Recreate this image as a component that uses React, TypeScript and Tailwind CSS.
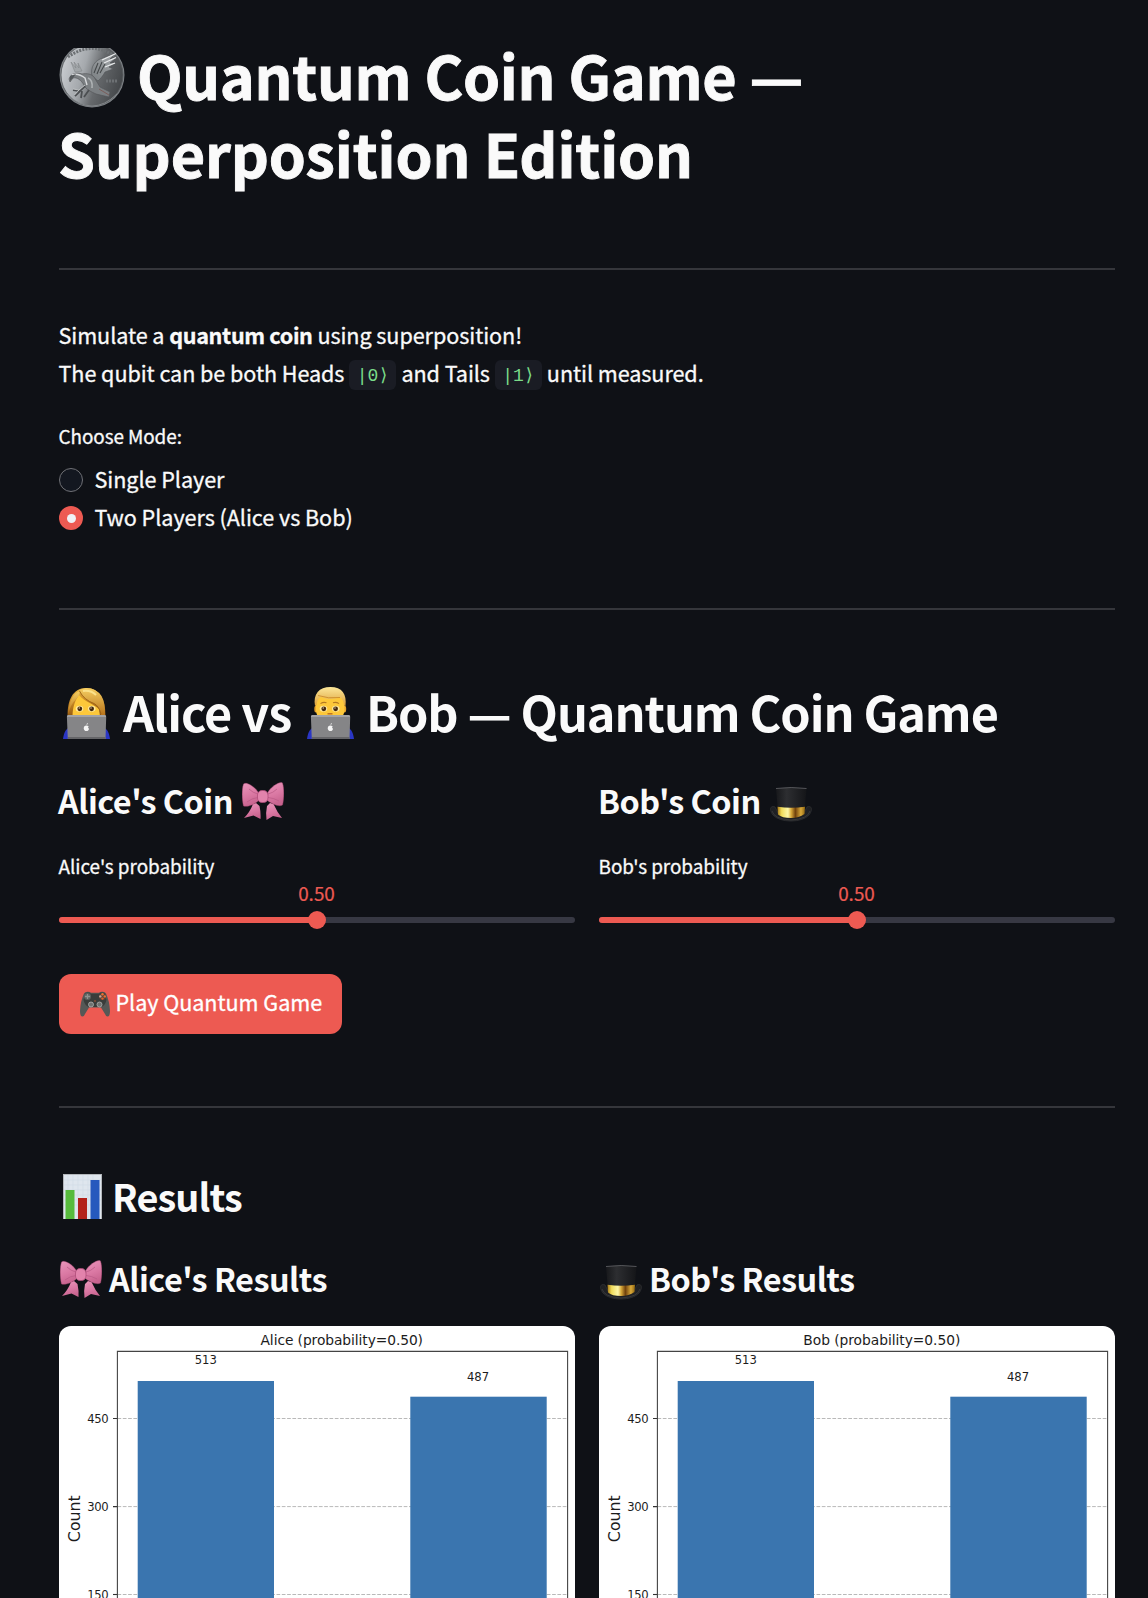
import React from "react";

function Coin() {
  return (
    <svg className="mt-[13px] h-[60px] w-[66px] shrink-0" viewBox="0 6 66 60">
      <defs>
        <linearGradient id="coinFace" x1="0" y1="0.35" x2="1" y2="0.65">
          <stop offset="0" stopColor="#c9ccd0" />
          <stop offset="0.35" stopColor="#a5a9ad" />
          <stop offset="0.6" stopColor="#66696c" />
          <stop offset="1" stopColor="#424548" />
        </linearGradient>
        <linearGradient id="coinWing" x1="0" y1="1" x2="1" y2="0">
          <stop offset="0" stopColor="#7b8083" />
          <stop offset="1" stopColor="#a9acaf" />
        </linearGradient>
      </defs>
      <circle cx="33" cy="33" r="32.5" fill="#7e8286" />
      <circle cx="33" cy="33" r="31" fill="url(#coinFace)" stroke="#55595c" strokeWidth="0.8" />
      <path d="M9 15 Q 33 -2 57 15" fill="none" stroke="#6d7174" strokeWidth="3" strokeDasharray="2 1.2" />
      <path d="M33 34 C31 25 36 18 44 16 L57 11 L51 17 L58 15 L51 21 L57 21 L50 25 L54 27 L46 30 C44 34 41 37 39 39 Z" fill="url(#coinWing)" stroke="#505457" strokeWidth="0.6" />
      <path d="M43 18 L57 11.500 M45 21 L57 15.500 M46 25 L56 21" stroke="#e9ebec" strokeWidth="1.3" fill="none" />
      <path d="M35 31 L39 21 M38 32 L43 20 M41 31 L46 22" stroke="#45494b" strokeWidth="1.1" fill="none" />
      <path d="M12 20 L17 26 L15 20 L20 26 L19 21 L23 29 L16 30 Z" fill="#a1a5a8" stroke="#7c8083" strokeWidth="0.5" />
      <path d="M10 37 C12 31 18 30 23 32 C28 31 32 32 35 35 L41 45 L51 50 L50 55 L37 52 C33 50 27 48 25 43 C22 38 18 35 14 36 L11 40 Z" fill="#7b7f82" stroke="#505356" strokeWidth="0.6" />
      <path d="M13 33 C18 31 22 33 26 36 L28 43" fill="none" stroke="#d8dadc" strokeWidth="1.4" />
      <path d="M11 34 L17 32 L14 36 L11 39" fill="#54585b" />
      <path d="M29 36 Q34 38 33 46" fill="none" stroke="#aeb2b4" strokeWidth="1.6" />
      <path d="M26 44 L21 49 L14 48 M21 49 L16 54 M23 49 L22 56 M30 48 L25 55" fill="none" stroke="#4b4e51" strokeWidth="1.8" />
      <path d="M26 43 L20 48 L14 47 M20 48 L15.500 53" fill="none" stroke="#c5c8ca" strokeWidth="0.9" />
      <path d="M40 47 L50 53" stroke="#7b5a57" strokeWidth="0.9" />
      <path d="M47 39 h12" stroke="#6d7174" strokeWidth="3" strokeDasharray="2 1" />
      <path d="M8 52 Q 33 76 58 52" fill="none" stroke="#8d9194" strokeWidth="0.8" />
    </svg>
  );
}

function Laptop() {
  return (
    <g>
      <path d="M0 52 C1 45 3 41 8 40 H39 C44 41 46 45 47 52 Z" fill="#2a36c4" />
      <path d="M5.5 28 H41.5 Q43.300 28 43.200 30 L42.500 52 H4.800 L3.900 30 Q3.900 28 5.500 28 Z" fill="#858587" />
      <path d="M5.5 28 H41.500 Q43 28 43.200 30 H3.900 Q4 28 5.500 28 Z" fill="#a3a3a5" />
      <rect x="5" y="50" width="37.500" height="2" fill="#656568" />
      <ellipse cx="23.400" cy="41.300" rx="2.600" ry="2.800" fill="#f4f4f4" />
      <path d="M23.400 38 q0.200 -1.700 1.600 -1.900 q0 1.600 -1.600 1.900" fill="#f4f4f4" />
      <circle cx="26" cy="40.600" r="0.900" fill="#858587" />
    </g>
  );
}

function Face() {
  return (
    <g>
      <ellipse cx="16.500" cy="21.800" rx="3.800" ry="3" fill="#ffeaa0" />
      <ellipse cx="28.800" cy="21.800" rx="3.800" ry="3" fill="#ffeaa0" />
      <circle cx="16.800" cy="21.800" r="2.400" fill="#43280f" />
      <circle cx="28.600" cy="21.800" r="2.400" fill="#43280f" />
      <circle cx="16.200" cy="21" r="0.700" fill="#e8d7b8" />
      <circle cx="28" cy="21" r="0.700" fill="#e8d7b8" />
    </g>
  );
}

function WomanTechnologist() {
  return (
    <svg className="ml-1 mt-[5px] h-[52px] w-[47px] shrink-0" viewBox="0 0 47 52">
      <defs>
        <linearGradient id="womanHair" x1="0" y1="0" x2="0.2" y2="1">
          <stop offset="0" stopColor="#f0c04a" />
          <stop offset="0.5" stopColor="#c98a26" />
          <stop offset="1" stopColor="#8f5510" />
        </linearGradient>
        <linearGradient id="womanFringe" x1="0" y1="0" x2="0" y2="1">
          <stop offset="0" stopColor="#f6cf62" />
          <stop offset="1" stopColor="#b8741b" />
        </linearGradient>
      </defs>
      <path d="M4.500 29 C4.500 14 9 1 23.500 1 C37 1 42.500 14 42.500 29 Z" fill="url(#womanHair)" />
      <path d="M9.500 29 C9.500 19 13 12 16 8 C22 15 31 17 36 22 L37 29 Z" fill="#fdc83a" />
      <path d="M5.500 27 Q7 18 14 11 Q17 8 17 4 Q12 5 9 11 Q5 19 5.500 27 Z" fill="url(#womanFringe)" />
      <path d="M16.500 4 Q21 13 31 16.500 Q36 19 38 28 L42 28 Q42.500 16 38.500 9 Q33 1 23 1 Q18 1.500 16.500 4 Z" fill="url(#womanFringe)" />
      <path d="M16.500 4 Q21 13 31 16.500 Q36 19 38 27" fill="none" stroke="#9c6114" strokeWidth="0.9" />
      <path d="M20 4 Q28 3 33 8" fill="none" stroke="#fbe28a" strokeWidth="2" />
      <Face />
      <Laptop />
    </svg>
  );
}

function ManTechnologist() {
  return (
    <svg className="mt-[5px] h-[52px] w-[47px] shrink-0" viewBox="0 0 47 52">
      <defs>
        <linearGradient id="manHair" x1="0" y1="0" x2="0" y2="1">
          <stop offset="0" stopColor="#fce79a" />
          <stop offset="1" stopColor="#dda038" />
        </linearGradient>
      </defs>
      <ellipse cx="9" cy="22" rx="1.700" ry="3.500" fill="#e7a32a" />
      <ellipse cx="37.500" cy="22" rx="1.700" ry="3.500" fill="#e7a32a" />
      <path d="M9 10 H37.500 V24 Q36 34 23 34 Q10 34 9 24 Z" fill="#fdc83a" />
      <path d="M8 19 C6 7 12 0 23.500 0 C35 0 40 7 38.500 19 L37 18 Q36.500 12 33 10.500 Q23 13.500 14 10 Q10 12 9.500 18 Z" fill="url(#manHair)" />
      <path d="M11 8.500 Q21 12 33 10.500" fill="none" stroke="#c98624" strokeWidth="0.8" />
      <path d="M13.500 16.600 q3 -2 6 -0.800 M26 15.800 q3 -1.200 6 0.800" fill="none" stroke="#b57a22" strokeWidth="1.100" />
      <Face />
      <path d="M20.500 26.800 h5" fill="none" stroke="#b5651f" strokeWidth="1.300" />
      <Laptop />
    </svg>
  );
}

function Bow({ className }: { className: string }) {
  return (
    <svg className={className} viewBox="0 0 42 38">
      <defs>
        <linearGradient id="bowFill" x1="0" y1="0" x2="0.3" y2="1">
          <stop offset="0" stopColor="#ea96bb" />
          <stop offset="0.6" stopColor="#da78a3" />
          <stop offset="1" stopColor="#c8648f" />
        </linearGradient>
      </defs>
      <path d="M14 21 L17.500 24 Q19 31 18.500 37 L11.500 33.500 L2 36 Q8 30 11 22 Z" fill="url(#bowFill)" />
      <path d="M28 21 L25 24 Q23.500 31 24.500 38 L31 34 L40 36 Q35 30 31.500 22 Z" fill="url(#bowFill)" />
      <path d="M16 10 C12 4 4 -0.500 1.500 2 C-0.500 8 0 18 1.500 24 C5 25.500 14 22 17 18 Z" fill="url(#bowFill)" stroke="#a84372" strokeWidth="0.4" />
      <path d="M26 10 C30 4 38 -1 40.500 1 C42.500 7 42 17 40.500 23 C37 25.500 28 21 25 18 Z" fill="url(#bowFill)" stroke="#a84372" strokeWidth="0.4" />
      <path d="M7 7 Q11 11 16 12 M5 20 Q10 16 16 15.500 M35 7 Q31 11 26 12 M37 19 Q32 16 26 15.500" fill="none" stroke="#bd5c88" strokeWidth="0.8" />
      <rect x="15.500" y="8.500" width="10.500" height="12" rx="4.500" fill="#e283ac" stroke="#b04c7a" strokeWidth="0.800" />
    </svg>
  );
}

function TopHat({ className }: { className: string }) {
  return (
    <svg className={className} viewBox="0 0 42 35">
      <defs>
        <linearGradient id="hatBand" x1="0" y1="0" x2="1" y2="0">
          <stop offset="0" stopColor="#a87a16" />
          <stop offset="0.15" stopColor="#f0dc5c" />
          <stop offset="0.38" stopColor="#fdf8a8" />
          <stop offset="0.5" stopColor="#d8a93a" />
          <stop offset="0.65" stopColor="#70410c" />
          <stop offset="0.85" stopColor="#d9a93a" />
          <stop offset="1" stopColor="#8f650f" />
        </linearGradient>
        <linearGradient id="hatCrown" x1="0" y1="0" x2="1" y2="0">
          <stop offset="0" stopColor="#17181b" />
          <stop offset="0.35" stopColor="#2d2e31" />
          <stop offset="1" stopColor="#141518" />
        </linearGradient>
      </defs>
      <path d="M5 20 C0 18 -1 23 3 28 C10 36 32 36 39 28 C43 23 42 18 37 20 L34 26 H8 Z" fill="#1f2023" stroke="#303134" strokeWidth="0.8" />
      <path d="M6 1.500 Q21 -0.500 36.500 1.500 L34.500 24 H8 Z" fill="url(#hatCrown)" />
      <path d="M6 1.500 Q21 -0.500 36.500 1.500" fill="none" stroke="#55565a" strokeWidth="1" />
      <path d="M7.500 19.800 Q21 21.800 35 19.800 L34.500 27 Q29 31 21 31 Q12 31 8 27.500 Z" fill="url(#hatBand)" />
      <path d="M2 24 Q4 32 21 33 Q38 32 40 24" fill="none" stroke="#3c3d40" strokeWidth="0.800" />
    </svg>
  );
}

function Gamepad() {
  return (
    <svg className="mt-[17px] h-[26px] w-[30px] shrink-0" viewBox="0 0 30 26">
      <path d="M4 2.500 Q5 0.500 8 0.800 Q10 0.800 11 1.800 H19 Q20 0.800 22 0.800 Q25 0.500 26 2.500 Q29.500 10 30 20 Q30 25.500 27.500 25.500 Q26 25.500 25 23 L21 16.500 H9 L5 23 Q4 25.500 2.500 25.500 Q0 25.500 0 20 Q0.500 10 4 2.500 Z" fill="#555856" />
      <path d="M5 2.500 Q8 0.500 11 2.800 H19 Q22 0.500 25 2.500 L26.500 9 Q25 15 21 16 H9 Q5 15 3.500 9 Z" fill="#3a3d3b" />
      <circle cx="7.500" cy="5.500" r="3.500" fill="#5e615f" />
      <path d="M7.500 3 v5 M5 5.500 h5" stroke="#8f9290" strokeWidth="1.300" />
      <circle cx="22.500" cy="5.500" r="3.500" fill="#5c4338" />
      <circle cx="22.500" cy="3.200" r="1.200" fill="#f07030" />
      <circle cx="24.800" cy="5.400" r="1.200" fill="#f07030" />
      <circle cx="20.300" cy="5.400" r="1.200" fill="#c8a79b" />
      <circle cx="22.500" cy="7.600" r="1.200" fill="#e0602a" />
      <circle cx="11" cy="13.500" r="2.500" fill="#707371" stroke="#b0b3b1" strokeWidth="0.800" />
      <circle cx="19.500" cy="13.500" r="2.500" fill="#707371" stroke="#b0b3b1" strokeWidth="0.800" />
      <circle cx="15" cy="10" r="0.800" fill="#b4562e" />
    </svg>
  );
}

function BarChartIcon() {
  return (
    <svg className="ml-1 mt-1 h-[45px] w-[39px] shrink-0" viewBox="0 0 39 45">
      <rect width="39" height="45" fill="#dfe6ee" />
      <path d="M5 1 V45 M10 1 V45 M15 1 V45 M20 1 V45 M25 1 V45 M30 1 V45 M1 6 H38 M1 11 H38 M1 16 H38 M1 21 H38 M1 26 H38 M1 31 H38" stroke="#d2dce6" strokeWidth="0.600" />
      <rect x="0.500" y="0.500" width="38" height="45" fill="none" stroke="#b3b7bb" />
      <rect x="2.500" y="16" width="9" height="29" fill="#57bb3c" />
      <rect x="15" y="24" width="9" height="21" fill="#b3221a" />
      <rect x="27.500" y="6" width="9" height="39" fill="#2659bd" />
    </svg>
  );
}

function Divider() {
  return <hr className="h-0.5 border-0 bg-[#35363b]" />;
}

function Slider({ label, value }: { label: string; value: number }) {
  return (
    <div className="text-[18.9px]">
      <div className="-ml-[0.5px] h-[30px] leading-[30px] tracking-[-0.03px] [-webkit-text-stroke:0.3px]">{label}</div>
      <div className="mr-px h-6 text-center leading-6 text-[#ed5a52] [-webkit-text-stroke:0.2px]">{value.toFixed(2)}</div>
      <div className="mt-3 flex h-1.5 items-center rounded-full bg-[#373843]">
        <div className="h-1.5 rounded-l-full bg-[#ed5a52]" style={{ width: `${value * 100}%` }} />
        <div className="-ml-[9px] size-[18px] shrink-0 rounded-full bg-[#ed5a52]" />
      </div>
    </div>
  );
}

function Histogram({ title, x, width }: { title: string; x: number; width: number }) {
  const ticks = [
    { y: 92.5, label: "450" },
    { y: 180.6, label: "300" },
    { y: 268.5, label: "150" },
  ];
  return (
    <svg className="block h-[272px] w-[516px] rounded-t-xl bg-white" viewBox="0 0 516 272" fontFamily="DejaVu Sans" fill="#1c1c1c">
      {ticks.map((t) => (
        <g key={t.label}>
          <path d={`M58.500 ${t.y} H508.500`} stroke="#b9b9b9" strokeWidth="1" strokeDasharray="3.700 1.600" />
          <path d={`M54 ${t.y} H58.500`} stroke="#333" strokeWidth="1.100" />
          <text x="49.700" y={t.y + 4.6} fontSize="11.600" textAnchor="end" textLength="21.500">{t.label}</text>
        </g>
      ))}
      <rect x="78.700" y="55" width="136.300" height="240" fill="#3a75af" />
      <rect x="351.300" y="70.700" width="136.400" height="240" fill="#3a75af" />
      <path d="M58.400 272 V25.400 H508.600 V272" fill="none" stroke="#444" strokeWidth="1.100" />
      <text x="146.700" y="38.400" fontSize="11.600" textAnchor="middle">513</text>
      <text x="419" y="54.700" fontSize="11.600" textAnchor="middle">487</text>
      <text x={x} y="19" fontSize="13.800" textLength={width}>{title}</text>
      <text transform="translate(21 192.700) rotate(-90)" fontSize="15.800" textAnchor="middle">Count</text>
    </svg>
  );
}

const codeClass =
  "mx-[5px] -mt-[3px] inline-block h-[30px] w-[47px] rounded-md bg-[#1a1c24] text-center align-middle font-['Liberation_Mono','DejaVu_Sans_Mono',monospace] text-[18px] leading-[33px] tracking-normal text-[#7bdc89] [-webkit-text-stroke:0px]";

export default function App() {
  return (
    <main className="h-[1598px] overflow-hidden whitespace-nowrap bg-[#0f1116] pl-[59px] pr-[33px] pt-[35px] font-['Noto_Sans_CJK_SC',sans-serif] text-[#fafafa]">
      <h1 className="h-[156px] text-[59.3px] font-bold leading-[78px] [-webkit-text-stroke:0.9px]">
        <span className="flex h-[78px] items-start">
          <Coin />
          <span className="ml-3 tracking-[-0.3px]">Quantum Coin Game —</span>
        </span>
        <span className="-ml-px block h-[78px] tracking-[-0.11px]">Superposition Edition</span>
      </h1>

      <div className="mt-[77px]">
        <Divider />
      </div>

      <div className="-ml-[0.5px] mt-[46px] h-[76px] text-[21.6px] leading-[38px] tracking-[-0.07px] [-webkit-text-stroke:0.3px]">
        <div className="h-[38px]">
          Simulate a <strong className="font-bold tracking-[-0.34px]">quantum coin</strong> using superposition!
        </div>
        <div className="h-[38px]">
          The qubit can be both Heads<code className={codeClass}>|0⟩</code>and Tails
          <code className={codeClass}>|1⟩</code>until measured.
        </div>
      </div>

      <div className="-ml-[0.5px] mt-[29px] h-[30px] text-[18.9px] leading-[30px] tracking-[-0.07px] [-webkit-text-stroke:0.3px]">Choose Mode:</div>
      <div className="mt-[10px] text-[21.6px] leading-[35px] tracking-[-0.05px] [-webkit-text-stroke:0.3px]">
        <label className="flex h-[38px] items-start">
          <span className="mt-[7px] size-6 rounded-full border border-[#707176] bg-[#131720]" />
          <span className="ml-[11.5px]">Single Player</span>
        </label>
        <label className="flex h-[38px] items-start">
          <span className="mt-[7px] flex size-6 items-center justify-center rounded-full bg-[#ed5a52]">
            <span className="size-[9px] rounded-full bg-[#f0f2f6]" />
          </span>
          <span className="ml-[11.5px]">Two Players (Alice vs Bob)</span>
        </label>
      </div>

      <div className="mt-[71px]">
        <Divider />
      </div>

      <h2 className="mt-[72px] flex h-[58px] items-start text-[48.6px] font-bold leading-[58px] tracking-[-1.07px]">
        <WomanTechnologist />
        <span className="ml-[13px] w-[184px]">Alice vs</span>
        <ManTechnologist />
        <span className="ml-3">Bob — Quantum Coin Game</span>
      </h2>

      <div className="mt-[38px] grid grid-cols-2 gap-6">
        <div>
          <h4 className="mb-[29px] flex h-[44px] items-start text-[32.4px] font-bold leading-[44px] tracking-[-0.51px]">
            <span className="-ml-px w-[184px]">Alice's Coin</span>
            <Bow className="mt-1 h-[38px] w-[42px]" />
          </h4>
          <Slider label="Alice's probability" value={0.5} />
        </div>
        <div>
          <h4 className="mb-[29px] flex h-[44px] items-start text-[32.4px] font-bold leading-[44px] tracking-[-0.51px]">
            <span className="-ml-px w-[172px]">Bob's Coin</span>
            <TopHat className="mt-[9px] h-[35px] w-[42px]" />
          </h4>
          <Slider label="Bob's probability" value={0.5} />
        </div>
      </div>

      <button className="mt-[51px] flex h-[60px] w-[283px] items-start rounded-xl bg-[#ed5a52] pl-[21px] text-[21.6px] leading-[55px] tracking-[-0.06px] text-white [-webkit-text-stroke:0.3px]">
        <Gamepad />
        <span className="ml-[5.5px]">Play Quantum Game</span>
      </button>

      <div className="mt-[72px]">
        <Divider />
      </div>

      <h3 className="mt-[62px] flex h-[50px] items-start text-[37.8px] font-bold leading-[52px] tracking-[-0.9px]">
        <BarChartIcon />
        <span className="ml-[10px]">Results</span>
      </h3>

      <div className="mt-9 grid grid-cols-2 gap-6">
        <div>
          <h4 className="mb-[26px] flex h-[44px] items-start text-[32.4px] font-bold leading-[44px] tracking-[-0.5px]">
            <Bow className="ml-[0.5px] mt-1 h-[38px] w-[42px]" />
            <span className="ml-[7.5px]">Alice's Results</span>
          </h4>
          <Histogram title="Alice (probability=0.50)" x={201.5} width={162.5} />
        </div>
        <div>
          <h4 className="mb-[26px] flex h-[44px] items-start text-[32.4px] font-bold leading-[44px] tracking-[-0.52px]">
            <TopHat className="ml-px mt-[9px] h-[35px] w-[42px]" />
            <span className="ml-[7px]">Bob's Results</span>
          </h4>
          <Histogram title="Bob (probability=0.50)" x={204.3} width={157} />
        </div>
      </div>
    </main>
  );
}
